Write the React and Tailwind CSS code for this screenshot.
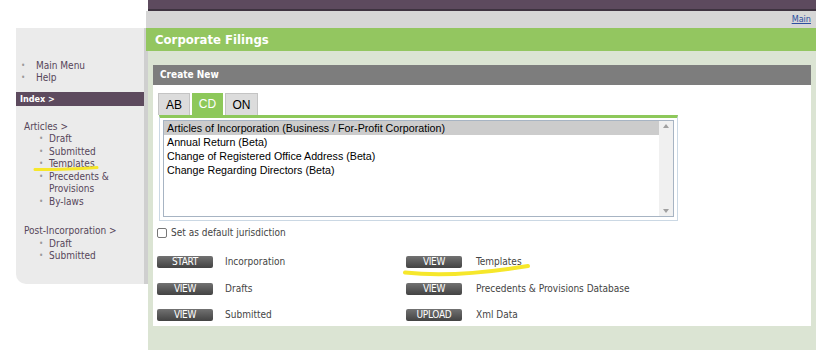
import React from 'react';

const sideFont = "font-['DejaVu_Sans_Condensed','DejaVu_Sans',sans-serif]";

const articles = ['Draft', 'Submitted', 'Templates', 'Precedents & Provisions', 'By-laws'];
const postInc = ['Draft', 'Submitted'];
const filings = [
  'Articles of Incorporation (Business / For-Profit Corporation)',
  'Annual Return (Beta)',
  'Change of Registered Office Address (Beta)',
  'Change Regarding Directors (Beta)',
];
const actions = [
  ['START', 'Incorporation', 'VIEW', 'Templates'],
  ['VIEW', 'Drafts', 'VIEW', 'Precedents & Provisions Database'],
  ['VIEW', 'Submitted', 'UPLOAD', 'Xml Data'],
];

function SubItem({ label }) {
  return (
    <li className="flex items-start leading-[12.6px]">
      <span className="w-[10px] shrink-0 text-[8px] text-[#9a9a9a]">•</span>
      <span className="w-[78px]">{label}</span>
    </li>
  );
}

function Sidebar() {
  return (
    <div className="w-[148px] shrink-0 pt-[28px] pl-[16px]">
      <div className="h-[256px] rounded-bl-[10px] border-r-[4px] border-[#cfcfcf] bg-[#ebebeb] text-[10px] text-[#56465a]">
        <ul className="pt-[32px] pl-[5px]">
          <li className="flex leading-[12px]">
            <span className="w-[15px] text-[8px] text-[#9a9a9a]">•</span>Main Menu
          </li>
          <li className="flex leading-[12px]">
            <span className="w-[15px] text-[8px] text-[#9a9a9a]">•</span>Help
          </li>
        </ul>
        <div className="mt-[8px] h-[14px] bg-[#5d4a5e] pl-[4px] text-[9px] font-bold leading-[14px] text-white">
          Index &gt;
        </div>
        <div className="pl-[8px] pt-[14px]">
          <div className="leading-[13px] font-medium">Articles &gt;</div>
          <ul className="pl-[15px]">
            {articles.map((a) => (
              <SubItem key={a} label={a} />
            ))}
          </ul>
          <div className="mt-[15px] leading-[13px]">Post-Incorporation &gt;</div>
          <ul className="pl-[15px] pt-[1px]">
            {postInc.map((a) => (
              <SubItem key={a} label={a} />
            ))}
          </ul>
        </div>
      </div>
    </div>
  );
}

function Btn({ label }) {
  return (
    <span className="flex h-[12px] w-[56px] items-center justify-center rounded-[2px] bg-gradient-to-b from-[#727272] to-[#434343] text-[10px] leading-none tracking-[-0.3px] text-white">
      {label}
    </span>
  );
}

function ListBox() {
  return (
    <div className="ml-[2px] w-[519px] border border-t-[3px] border-[#cbd8e4] border-t-[#8dc85a] px-[3px] pt-[2px] pb-[3px]">
      <div className="flex h-[97px] border border-[#a7b4c3] bg-white">
        <div className="flex-1 font-['Liberation_Sans',Arial,sans-serif] text-[10.7px] leading-[14px] text-black">
          {filings.map((f, i) => (
            <div key={f} className={`pl-[3px] ${i === 0 ? 'bg-[#cccccc]' : ''}`}>
              {f}
            </div>
          ))}
        </div>
        <div className="flex w-[14px] flex-col items-center justify-between bg-[#f0f0f0] py-[3px]">
          <span className="h-0 w-0 border-x-[3px] border-b-[4px] border-x-transparent border-b-[#a0a0a0]" />
          <span className="h-0 w-0 border-x-[3px] border-t-[4px] border-x-transparent border-t-[#a0a0a0]" />
        </div>
      </div>
    </div>
  );
}

function Highlights() {
  return (
    <svg className="pointer-events-none absolute left-0 top-0" width="832" height="361">
      <path d="M35 169.5 Q60 170 97 167.5" stroke="#f6e72b" strokeWidth="3" fill="none" strokeLinecap="round" />
      <path d="M405 272.5 Q455 278 528 266" stroke="#f6e72b" strokeWidth="4" fill="none" strokeLinecap="round" />
    </svg>
  );
}

export default function App() {
  return (
    <div className={`relative h-[361px] w-[832px] overflow-hidden bg-white ${sideFont}`}>
      <div className="flex">
        <Sidebar />
        <div className="w-[668px] shrink-0">
          <div className="h-[11px] border-b-[2px] border-[#3e3340] bg-[#5d4a5e]" />
          <div className="-ml-[2px] flex h-[17px] items-center justify-end bg-[#d6d6d6] pr-[5px]">
            <a className="text-[9px] text-[#2d4ea0] underline">Main</a>
          </div>
          <div className="-ml-[2px] h-[23px] bg-[#93c660] pl-[9px] text-[13px] font-bold leading-[23px] text-white">
            Corporate Filings
          </div>
          <div className="bg-[#dbe4d3] px-[5px] pt-[14px] pb-[24px]">
            <div className="h-[20px] bg-[#7d7d7d] pl-[7px] text-[10px] font-bold leading-[20px] text-white">
              Create New
            </div>
            <div className="h-[241px] bg-white pl-[4px] pt-[8px]">
              <div className="flex gap-[2px] pl-[1px] font-['Liberation_Sans',Arial,sans-serif] text-[12px]">
                <span className="flex h-[22px] w-[32px] items-center justify-center border border-b-0 border-[#c4c4c4] bg-[#dcdcdc] text-black">AB</span>
                <span className="flex h-[22px] w-[31px] items-center justify-center bg-[#8dc85a] text-white">CD</span>
                <span className="flex h-[22px] w-[33px] items-center justify-center border border-b-0 border-[#c4c4c4] bg-[#dcdcdc] text-black">ON</span>
              </div>
              <ListBox />
              <label className="mt-[4px] flex items-center gap-[4px] text-[10px] text-[#444]">
                <span className="h-[10px] w-[10px] rounded-[2px] border border-[#777] bg-white" />
                Set as default jurisdiction
              </label>
              <div className="mt-[16px] grid grid-cols-[249px_1fr] text-[10px] text-[#444]">
                {actions.map(([b1, l1, b2, l2]) => (
                  <React.Fragment key={l1}>
                    <div className="flex h-[26.5px] items-start gap-[12px]">
                      <Btn label={b1} />
                      <span className="leading-[12px]">{l1}</span>
                    </div>
                    <div className="flex h-[26.5px] items-start gap-[14px]">
                      <Btn label={b2} />
                      <span className="leading-[12px]">{l2}</span>
                    </div>
                  </React.Fragment>
                ))}
              </div>
            </div>
          </div>
        </div>
      </div>
      <Highlights />
    </div>
  );
}
